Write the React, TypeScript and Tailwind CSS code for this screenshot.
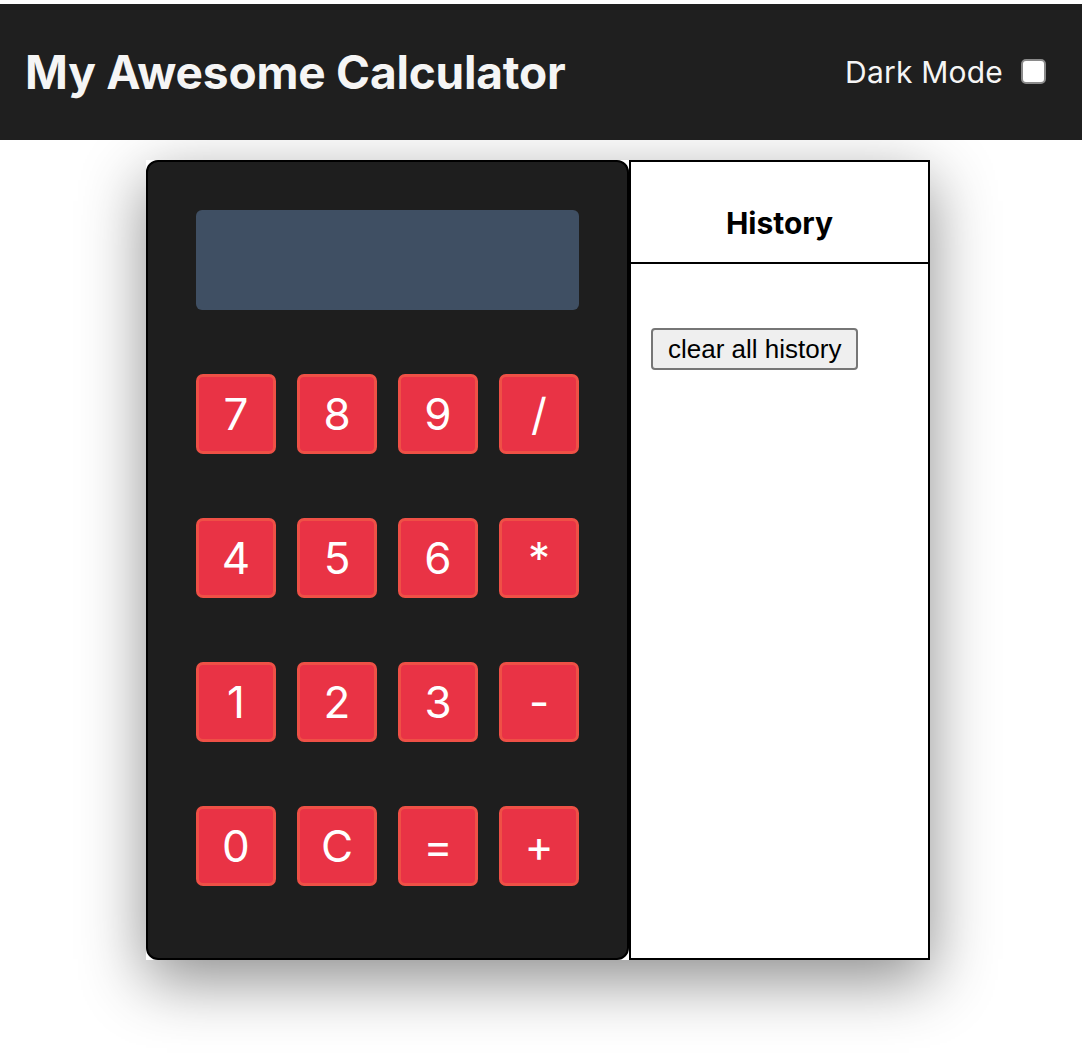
import { useState } from "react";

const keys = ["7", "8", "9", "/", "4", "5", "6", "*", "1", "2", "3", "-", "0", "C", "=", "+"];

export default function App() {
  const [display, setDisplay] = useState("");
  const [history, setHistory] = useState<string[]>([]);
  const [dark, setDark] = useState(false);

  function press(k: string) {
    if (k === "C") {
      setDisplay("");
      return;
    }
    if (k === "=") {
      try {
        // eslint-disable-next-line no-new-func
        const result = String(Function(`"use strict";return (${display})`)());
        setHistory((h) => [...h, `${display} = ${result}`]);
        setDisplay(result);
      } catch {
        setDisplay("Error");
      }
      return;
    }
    setDisplay((d) => d + k);
  }

  return (
    <div className={`min-h-[1060px] pt-1 font-['Inter',sans-serif] ${dark ? "bg-neutral-900" : "bg-white"}`}>
      {/* Header */}
      <header className="h-[136px] bg-[#1f1f1f] flex items-center justify-between pl-[25px] pr-[36px] relative z-10">
        <h1 className="text-[46px] font-bold text-[#f5f5f5] tracking-[-0.2px]">My Awesome Calculator</h1>
        <label className="flex items-center gap-[18px] text-[30px] text-[#f5f5f5] tracking-[0.2px]">
          Dark Mode
          <input
            type="checkbox"
            checked={dark}
            onChange={(e) => setDark(e.target.checked)}
            className="appearance-none w-[25px] h-[25px] mt-[-2px] bg-white border-2 border-[#8a8a8a] rounded-[5px] checked:bg-blue-500"
          />
        </label>
      </header>

      <main className="flex justify-center pt-[20px]">
        <div className="flex bg-white shadow-[0_20px_60px_rgba(0,0,0,0.45)] mr-[6px]">
          {/* Calculator */}
          <div className="w-[483px] h-[800px] bg-[#1e1e1e] border-2 border-black rounded-[12px] px-[48px] pt-[48px]">
            <div className="h-[100px] rounded-[6px] bg-[#3f4f63] text-white text-[40px] flex items-center justify-end px-4 overflow-hidden">
              {display}
            </div>
            <div className="grid grid-cols-4 gap-x-[21px] gap-y-[64px] mt-[64px] w-[383px]">
              {keys.map((k) => (
                <button
                  key={k}
                  type="button"
                  onClick={() => press(k)}
                  className="w-[80px] h-[80px] bg-[#e93345] border-[3px] border-[#ef5046] rounded-[7px] text-white text-[44px] leading-none flex items-center justify-center"
                >
                  {k}
                </button>
              ))}
            </div>
          </div>

          {/* History */}
          <div className="w-[301px] h-[800px] border-2 border-black bg-white flex flex-col">
            <div className="h-[102px] border-b-2 border-black flex items-center justify-center pt-[22px]">
              <h2 className="text-[30px] font-bold text-black">History</h2>
            </div>
            <div className="px-[20px] pt-[64px]">
              <button
                type="button"
                onClick={() => setHistory([])}
                className="h-[42px] px-[15px] bg-[#efefef] border-2 border-[#767676] rounded-[4px] text-[26px] text-black font-['Liberation_Sans',Arial,sans-serif]"
              >
                clear all history
              </button>
              <ul className="mt-4 text-[20px] font-['Liberation_Sans',Arial,sans-serif]">
                {history.map((h, i) => (
                  <li key={i}>{h}</li>
                ))}
              </ul>
            </div>
          </div>
        </div>
      </main>
    </div>
  );
}
